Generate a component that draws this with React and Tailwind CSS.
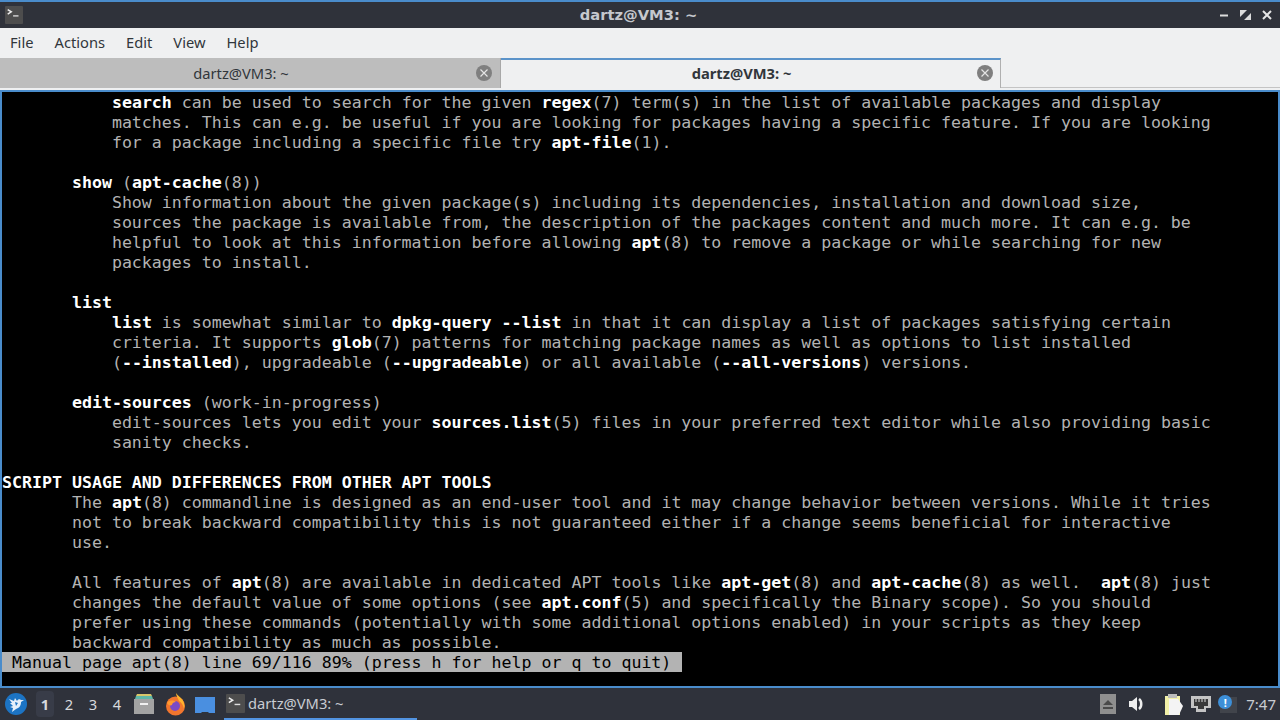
import React from 'react';

const lines = [
  '           **search** can be used to search for the given **regex**(7) term(s) in the list of available packages and display',
  '           matches. This can e.g. be useful if you are looking for packages having a specific feature. If you are looking',
  '           for a package including a specific file try **apt-file**(1).',
  '',
  '       **show** (**apt-cache**(8))',
  '           Show information about the given package(s) including its dependencies, installation and download size,',
  '           sources the package is available from, the description of the packages content and much more. It can e.g. be',
  '           helpful to look at this information before allowing **apt**(8) to remove a package or while searching for new',
  '           packages to install.',
  '',
  '       **list**',
  '           **list** is somewhat similar to **dpkg-query --list** in that it can display a list of packages satisfying certain',
  '           criteria. It supports **glob**(7) patterns for matching package names as well as options to list installed',
  '           (**--installed**), upgradeable (**--upgradeable**) or all available (**--all-versions**) versions.',
  '',
  '       **edit-sources** (work-in-progress)',
  '           edit-sources lets you edit your **sources.list**(5) files in your preferred text editor while also providing basic',
  '           sanity checks.',
  '',
  '**SCRIPT USAGE AND DIFFERENCES FROM OTHER APT TOOLS**',
  '       The **apt**(8) commandline is designed as an end-user tool and it may change behavior between versions. While it tries',
  '       not to break backward compatibility this is not guaranteed either if a change seems beneficial for interactive',
  '       use.',
  '',
  '       All features of **apt**(8) are available in dedicated APT tools like **apt-get**(8) and **apt-cache**(8) as well.  **apt**(8) just',
  '       changes the default value of some options (see **apt.conf**(5) and specifically the Binary scope). So you should',
  '       prefer using these commands (potentially with some additional options enabled) in your scripts as they keep',
  '       backward compatibility as much as possible.',
];

const TermLine = ({ text }) => (
  <div className="h-5 leading-[22px] whitespace-pre">
    {text.split('**').map((part, i) =>
      i % 2 === 1 ? (
        <span key={i} className="font-bold text-white">{part}</span>
      ) : (
        <span key={i}>{part}</span>
      )
    )}
  </div>
);

const TermIcon = ({ size = 20 }) => (
  <svg width={size} height={size} viewBox="0 0 20 20">
    <rect width="20" height="20" rx="1" fill="#4d4d4d" />
    <path d="M3 4l4 2.5L3 9" fill="none" stroke="#eee" strokeWidth="1.6" />
    <path d="M9 11h6" stroke="#ddd" strokeWidth="1.5" />
  </svg>
);

const TabClose = () => (
  <svg width="16" height="16" viewBox="0 0 16 16">
    <circle cx="8" cy="8" r="8" fill="#7f7f7f" />
    <path d="M4.5 4.5l7 7M11.5 4.5l-7 7" stroke="#e4e4e4" strokeWidth="1.2" />
  </svg>
);

const App = () => {
  return (
    <div className="w-[1280px] h-[720px] overflow-hidden flex flex-col bg-[#2f323a] font-['Noto_Sans',sans-serif]">
      {/* Title bar */}
      <div className="h-7 shrink-0 border-t-2 border-[#4a8ccb] bg-[#2f323a] flex items-center px-[8px]">
        <div className="flex-1 flex -ml-[3px]">
          <TermIcon size={18} />
        </div>
        <div className="text-[14.7px] font-bold font-['DejaVu_Sans',sans-serif] text-[#c5c8ce]">dartz@VM3: ~</div>
        <div className="flex-1 flex items-center justify-end gap-[11px]">
          <svg width="10" height="12" viewBox="0 0 10 12">
            <path d="M1 6.5h8" stroke="#dcdcdc" strokeWidth="2" />
          </svg>
          <svg width="11" height="12" viewBox="0 0 11 12">
            <path d="M0 1h7L0 8zM11 11H4l7-7z" fill="#dcdcdc" />
          </svg>
          <svg width="10" height="12" viewBox="0 0 10 12">
            <path d="M1 2l8 8M9 2l-8 8" stroke="#e6e6e6" strokeWidth="2" />
          </svg>
        </div>
      </div>

      {/* Menu bar */}
      <div className="h-[30px] shrink-0 bg-[#eff0f1] flex items-center pl-[10px] pb-[2px] gap-[21px] text-[14.7px] text-[#31363b]">
        <span>File</span>
        <span>Actions</span>
        <span>Edit</span>
        <span>View</span>
        <span>Help</span>
      </div>

      {/* Tabs */}
      <div className="h-8 shrink-0 bg-[#eff0f1] flex items-start text-[14.7px] text-[#31363b]">
        <div className="w-[501px] h-[30px] bg-[#bdbdbd] border-r border-[#a8a8a8] flex items-center relative">
          <span className="w-full text-center pr-[18px]">dartz@VM3: ~</span>
          <span className="absolute right-[8px] top-[7px] flex"><TabClose /></span>
        </div>
        <div className="w-[500px] h-[30px] border-t-2 border-r border-[#5b93c9] border-r-[#b0b0b0] flex items-center relative font-bold pb-[2px]">
          <span className="w-full text-center pr-[18px]">dartz@VM3: ~</span>
          <span className="absolute right-[7px] top-[5px] flex"><TabClose /></span>
        </div>
        <div className="flex-1 h-[30px] border-b border-[#c4c4c4]" />
      </div>

      {/* Terminal */}
      <div className="h-[598px] shrink-0 border-2 border-[#4a8ccb] bg-black text-[#b3b3b3] text-[16.6px] font-['DejaVu_Sans_Mono',monospace] overflow-hidden">
        {lines.map((text, i) => (
          <TermLine key={i} text={text} />
        ))}
        <div className="h-5 leading-[22px] w-[680px] bg-[#b3b3b3] text-black whitespace-pre">
          {' Manual page apt(8) line 69/116 89% (press h for help or q to quit)'}
        </div>
      </div>

      {/* Taskbar */}
      <div className="flex-1 flex items-center bg-[#2f323b] text-[#d8dade] text-[14.7px]">
        <div className="w-[36px] flex justify-center pr-[4px]">
          <svg width="22" height="22" viewBox="0 0 22 22">
            <circle cx="11" cy="11" r="11" fill="#1c74c4" />
            <path d="M4 6l5 2 1-3 2 3c1-2 3-2 4-1l3 0-3 2c0 4-2 6-5 7l-4 3 1-4-3-1 3-1-3-3 2 0z" fill="#e6f0fa" />
            <path d="M10 9l3 1-2 3z" fill="#1c74c4" />
          </svg>
        </div>
        <div className="flex items-center">
          <span className="w-[18px] h-[26px] rounded-sm bg-[#383c48] flex items-center justify-center font-bold">1</span>
          <span className="ml-[6px] w-[18px] text-center">2</span>
          <span className="ml-[6px] w-[18px] text-center">3</span>
          <span className="ml-[6px] w-[18px] text-center">4</span>
        </div>
        <div className="ml-[8px] flex">
          <svg width="20" height="22" viewBox="0 0 20 22">
            <path d="M3 1h14l1 2H2z" fill="#d8c66a" />
            <path d="M2 3h16l1 3H1z" fill="#5fb7a8" />
            <rect x="0" y="6" width="20" height="15" fill="#a3a3a3" />
            <rect x="6" y="10" width="8" height="2" fill="#f0f0f0" />
          </svg>
        </div>
        <div className="ml-[11px] flex">
          <svg width="21" height="23" viewBox="0 0 21 23">
            <circle cx="10.5" cy="13" r="9.5" fill="#f2762e" />
            <circle cx="10" cy="13" r="5" fill="#7a4bc4" />
            <path d="M11 0c1 2 3 3 5 5 3 3 4 7 3 11-1-4-2-6-5-8-1-3-3-5-3-8z" fill="#ffb42e" />
            <path d="M2 10c2-3 6-3 9-1-2 0-4 1-4 3-2 1-4 0-5-2z" fill="#ff9a2e" />
          </svg>
        </div>
        <div className="ml-[9px] flex pt-[2px]">
          <svg width="20" height="17" viewBox="0 0 20 17">
            <path d="M0 0h20v16h-6l-1-1H7l-1 1H0z" fill="#4a8fe0" />
          </svg>
        </div>
        <div className="ml-[9px] w-[193px] h-[32px] border-b-2 border-[#5294e2] flex items-center pl-[2px] gap-[3px]">
          <TermIcon size={19} />
          <span className="text-[#c8ccd2]">dartz@VM3: ~</span>
        </div>
        <div className="flex-1" />
        <div className="flex items-center">
          <div className="w-4 h-5 bg-[#8f8f8f] flex items-center justify-center">
            <svg width="10" height="9" viewBox="0 0 10 9">
              <path d="M5 0l5 5H0zM0 7h10v2H0z" fill="#4a4a4a" />
            </svg>
          </div>
          <svg className="ml-[13px]" width="17" height="16" viewBox="0 0 17 16">
            <path d="M0 5h3l5-4v14l-5-4H0z" fill="#eee" />
            <path d="M10 3c3 2 3 8 0 10" fill="none" stroke="#eee" strokeWidth="2.5" />
          </svg>
          <svg className="ml-[19px]" width="19" height="21" viewBox="0 0 19 21">
            <rect x="0" y="2" width="15" height="19" fill="#f2f0a8" />
            <rect x="3" y="0" width="9" height="4" fill="#bbb" />
            <path d="M4 5l9 0 5 7-4 9H4z" fill="#f4f4f4" />
          </svg>
          <svg className="ml-[7px]" width="20" height="16" viewBox="0 0 20 16">
            <path d="M0 0h20v12h-5v4H5v-4H0z" fill="#c4c4c4" />
            <path d="M3 3h14v7h-4v3H7v-3H3z" fill="#3a3a3a" />
            <path d="M5 3v3M8 3v3M11 3v3M14 3v3" stroke="#ddd" />
          </svg>
          <div className="ml-[7px] w-[19px] h-[18px] relative">
            <div className="absolute right-0 bottom-0 w-[17px] h-[16px] bg-[#41444b]" />
            <div className="absolute left-0 top-0 w-[14px] h-[14px] rounded-full bg-[#3d8fd8] flex items-center justify-center text-[11px] font-bold text-white leading-none">!</div>
          </div>
          <span className="ml-[9px] mr-[4px] text-[15px] text-[#c8ccd2]">7:47</span>
        </div>
      </div>
    </div>
  );
};

export default App;
